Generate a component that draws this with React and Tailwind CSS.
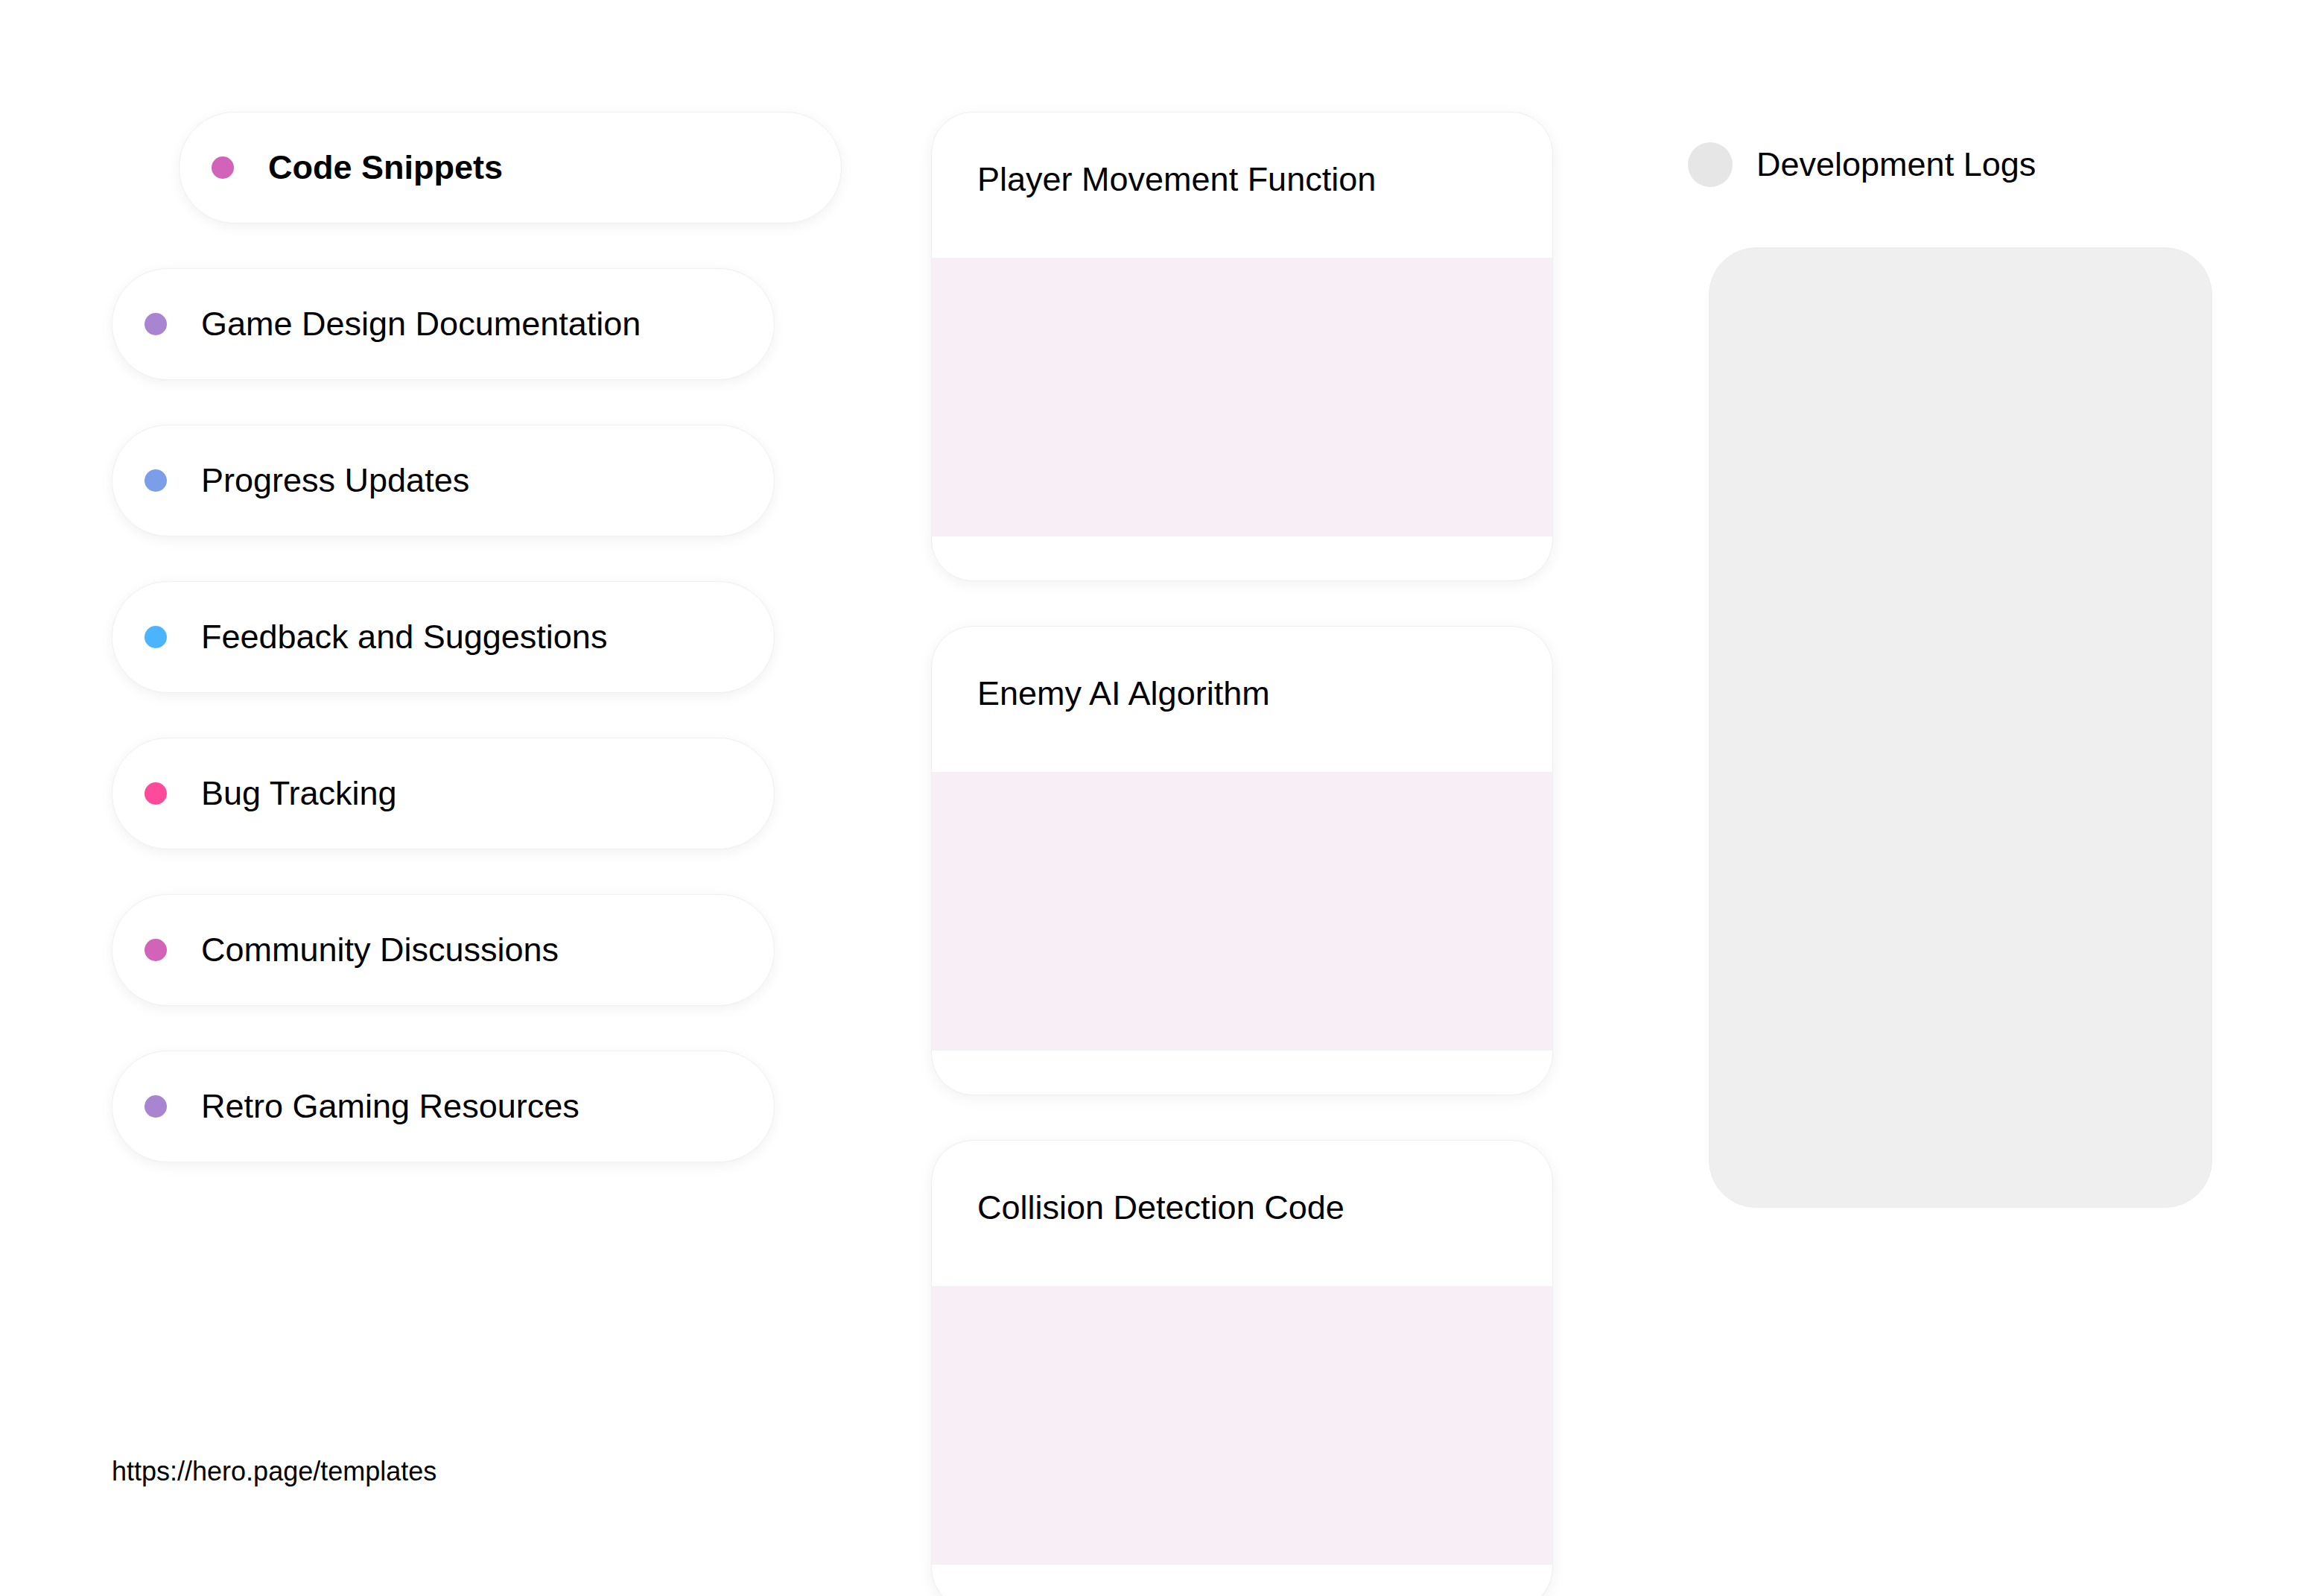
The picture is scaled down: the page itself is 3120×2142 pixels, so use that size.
import React from "react";

const categories = [
  { label: "Game Design Documentation", color: "bg-[#a884d1]" },
  { label: "Progress Updates", color: "bg-[#7a9fe8]" },
  { label: "Feedback and Suggestions", color: "bg-[#4cb4fe]" },
  { label: "Bug Tracking", color: "bg-[#fe4a9b]" },
  { label: "Community Discussions", color: "bg-[#d163b8]" },
  { label: "Retro Gaming Resources", color: "bg-[#a884d1]" },
];

const snippets = ["Player Movement Function", "Enemy AI Algorithm", "Collision Detection Code"];

function Pill({ label, color, bold, className = "" }) {
  return (
    <div
      className={`flex h-[150px] w-[890px] items-center rounded-full border border-[#f0f0f0] bg-white pl-[43px] shadow-[0_4px_18px_rgba(0,0,0,0.06)] ${className}`}
    >
      <span className={`h-[30px] w-[30px] shrink-0 rounded-full ${color}`} />
      <span className={`ml-[46px] text-[45px] text-black ${bold ? "font-bold" : "font-normal"}`}>{label}</span>
    </div>
  );
}

export default function App() {
  return (
    <div className="flex h-[2142px] w-[3120px] overflow-hidden bg-white pt-[150px] font-['Liberation_Sans',Arial,sans-serif] text-black">
      {/* Categories */}
      <div className="ml-[150px] flex w-[993px] shrink-0 flex-col">
        <div className="flex flex-col gap-[60px]">
          <Pill label="Code Snippets" color="bg-[#d163b8]" bold className="ml-[90px]" />
          {categories.map((c) => (
            <Pill key={c.label} label={c.label} color={c.color} />
          ))}
        </div>
        <p className="mt-[394px] text-[36px] leading-[41px]">https://hero.page/templates</p>
      </div>

      {/* Snippet cards */}
      <div className="ml-[107px] flex w-[835px] shrink-0 flex-col gap-[60px]">
        {snippets.map((s) => (
          <div
            key={s}
            className="flex h-[630px] shrink-0 flex-col overflow-hidden rounded-[56px] border border-[#efefef] bg-white shadow-[0_4px_20px_rgba(0,0,0,0.06)]"
          >
            <div className="h-[195px] shrink-0 pl-[61px] pt-[56px] text-[45px]">{s}</div>
            <div className="h-[374px] shrink-0 bg-[#f8eef6]" />
            <div className="h-[61px] shrink-0" />
          </div>
        ))}
      </div>

      {/* Development logs */}
      <div className="ml-[181px] flex flex-col">
        <div className="mt-[37px] flex items-center">
          <span className="h-[60px] w-[60px] rounded-full bg-[#e6e6e6]" />
          <span className="ml-[32px] text-[45px]">Development Logs</span>
        </div>
        <div className="ml-[28px] mt-[77px] h-[1289px] w-[676px] rounded-[64px] border border-[#ececec] bg-[#efefef]" />
      </div>
    </div>
  );
}
